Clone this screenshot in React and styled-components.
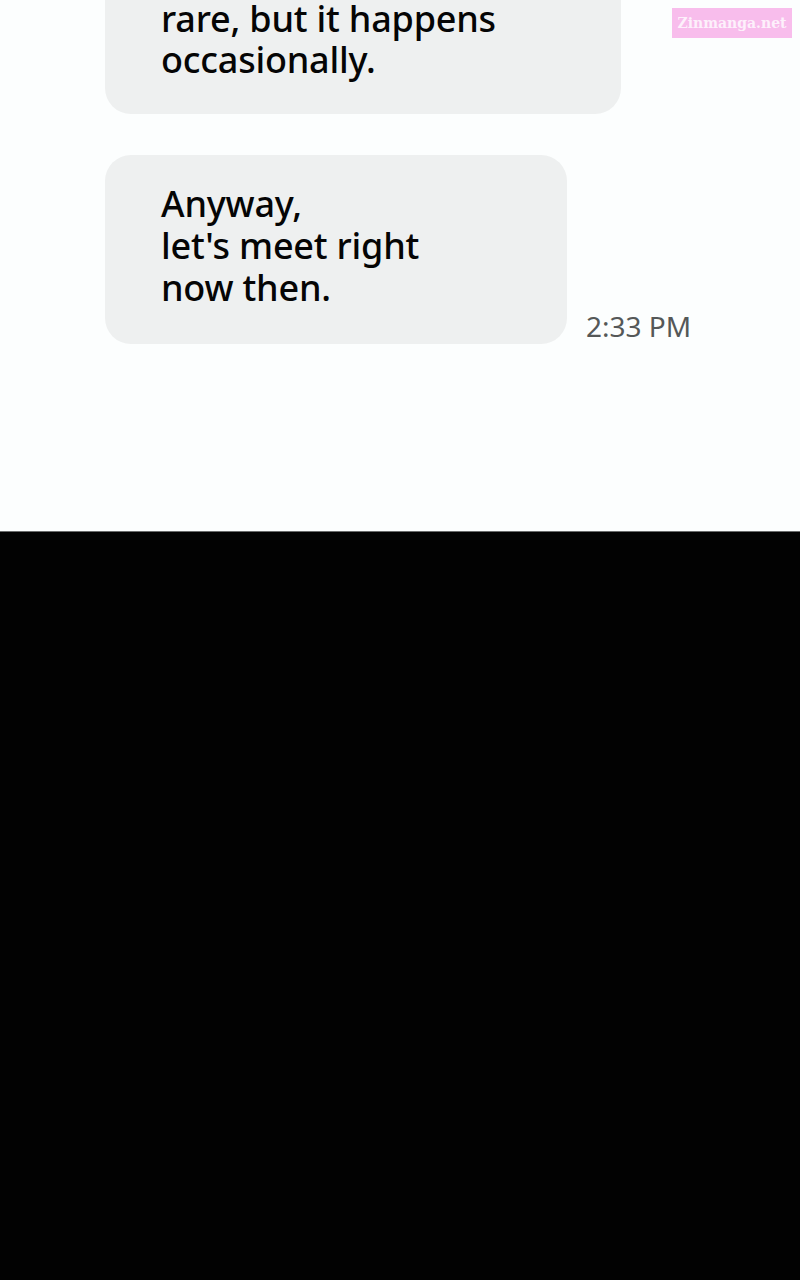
import React from 'react';
import styled, { createGlobalStyle } from 'styled-components';

const GlobalStyle = createGlobalStyle`
    html, body {
        margin: 0;
        padding: 0;
        background: #020202;
    }
    body {
        font-family: 'Noto Sans', 'DejaVu Sans', sans-serif;
    }
`;

const Screen = styled.div`
    position: relative;
    width: 800px;
    height: 1280px;
    background: #020202;
    overflow: hidden;
`;

const ChatPanel = styled.section`
    height: 532px;
    background: #fcfefe;
    border-bottom: 1px solid #6a6c6c;
    box-sizing: border-box;
    overflow: hidden;
`;

const Thread = styled.ul`
    list-style: none;
    margin: -30px 0 0;
    padding: 0 0 0 105px;
    display: flex;
    flex-direction: column;
    gap: 41px;
`;

const MessageRow = styled.li`
    display: flex;
    align-items: flex-end;
    gap: 19px;
`;

const Bubble = styled.div`
    width: ${props => props.width}px;
    box-sizing: border-box;
    padding: 28px 20px ${props => props.bottom || 35}px 56px;
    background: #eef0f0;
    border-radius: 26px;
    font-size: 36px;
    font-weight: 500;
    letter-spacing: -0.2px;
    line-height: ${props => props.lineHeight || 42}px;
    color: #050505;
    white-space: pre-line;
`;

const Time = styled.span`
    margin-bottom: 1px;
    font-size: 28px;
    line-height: 34px;
    color: #555858;
    white-space: nowrap;
`;

const Watermark = styled.div`
    position: absolute;
    top: 8px;
    left: 672px;
    width: 120px;
    height: 30px;
    display: flex;
    align-items: center;
    justify-content: center;
    background: #f8bdec;
    color: #fdf0fb;
    font-family: 'DejaVu Serif', 'Liberation Serif', serif;
    font-weight: bold;
    font-size: 14px;
`;

const messages = [
    { text: 'rare, but it happens\noccasionally.', width: 516, lineHeight: 41, bottom: 34 },
    { text: "Anyway,\nlet's meet right\nnow then.", width: 462, time: '2:33 PM' }
];

const App = () => (
    <Screen>
        <GlobalStyle />
        <ChatPanel>
            <Thread>
                {messages.map((m, i) => (
                    <MessageRow key={i}>
                        <Bubble width={m.width} lineHeight={m.lineHeight} bottom={m.bottom}>
                            {m.text}
                        </Bubble>
                        {m.time && <Time>{m.time}</Time>}
                    </MessageRow>
                ))}
            </Thread>
        </ChatPanel>
        <Watermark>Zinmanga.net</Watermark>
    </Screen>
);

export default App;
